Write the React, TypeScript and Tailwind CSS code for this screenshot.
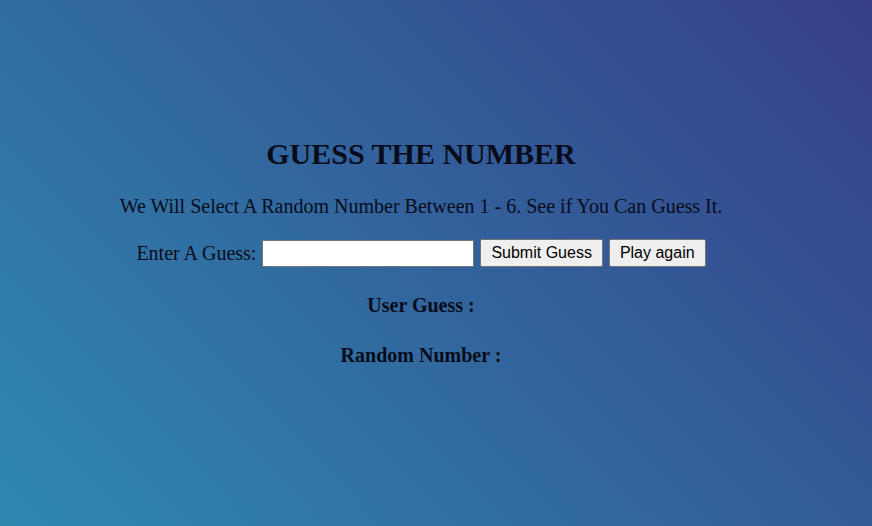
import React, { useState } from 'react';

const App: React.FC = () => {
    const [guess, setGuess] = useState('');
    const [userGuess, setUserGuess] = useState('');
    const [randomNumber, setRandomNumber] = useState('');

    const handleSubmit = () => {
        setUserGuess(guess);
        setRandomNumber(String(Math.floor(Math.random() * 6) + 1));
    };

    const handleReset = () => {
        setGuess('');
        setUserGuess('');
        setRandomNumber('');
    };

    return (
        <div className="min-h-screen w-full bg-[linear-gradient(45deg,#2e89af,#363e89)] font-['Liberation_Serif',serif] text-[#080c1a]">
            <div className="w-[842px] pt-[136px] flex flex-col items-center text-center">
                <h1 className="text-[30px] font-bold leading-[36px]">GUESS THE NUMBER</h1>
                <p className="mt-[22px] text-[20px] leading-[24px]">
                    We Will Select A Random Number Between 1 - 6. See if You Can Guess It.
                </p>
                <div className="mt-[20px] flex items-center gap-[6px] text-[20px]">
                    <label htmlFor="guess">Enter A Guess:</label>
                    <input
                        id="guess"
                        type="text"
                        value={guess}
                        onChange={(e) => setGuess(e.target.value)}
                        className="w-[212px] h-[27px] bg-white border border-[#767676] outline-none px-1 text-[16px]"
                    />
                    <button
                        onClick={handleSubmit}
                        className="h-[28px] px-[10px] bg-[#efefef] border border-[#767676] rounded-[2px] font-['Liberation_Sans',sans-serif] text-[16px] text-black"
                    >
                        Submit Guess
                    </button>
                    <button
                        onClick={handleReset}
                        className="h-[28px] px-[10px] bg-[#efefef] border border-[#767676] rounded-[2px] font-['Liberation_Sans',sans-serif] text-[16px] text-black"
                    >
                        Play again
                    </button>
                </div>
                <h3 className="mt-[25px] text-[20px] font-bold leading-[24px]">User Guess : {userGuess}</h3>
                <h3 className="mt-[26px] text-[20px] font-bold leading-[24px]">Random Number : {randomNumber}</h3>
            </div>
        </div>
    );
};

export default App;
